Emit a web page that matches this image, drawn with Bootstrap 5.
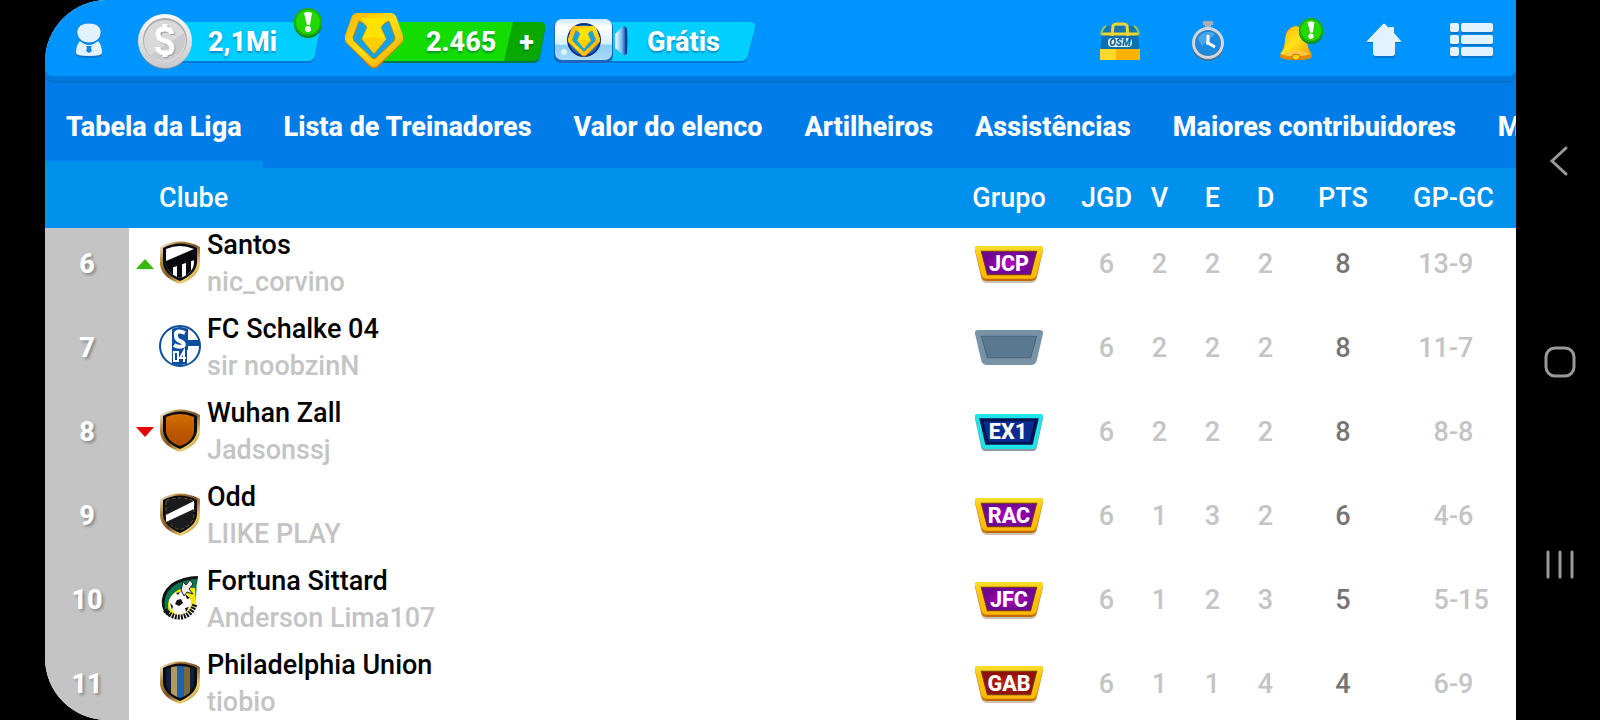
<!DOCTYPE html>
<html lang="pt-BR">
<head>
<meta charset="utf-8">
<meta name="viewport" content="width=device-width, initial-scale=1">
<title>Tabela da Liga</title>
<link href="https://cdn.jsdelivr.net/npm/bootstrap@5.3.0/dist/css/bootstrap.min.css" rel="stylesheet">
<style>
  body { font-family: Roboto, "Liberation Sans", sans-serif; font-size: 27px; font-weight: 500; background: #000; }
  .screen { padding-left: 45px; }
  .app { border-radius: 62px 0 0 62px; background: #fff; min-width: 0; }
  .topbar { height: 76px; background: #0094ff; border-radius: 0 0 8px 8px; box-shadow: 0 5px 0 #0079de, 0 7px 0 #006fce; z-index: 2; }
  .plain-btn { background: none; border: 0; padding: 0; color: #fff; }
  .icon-btn { width: 88px; height: 76px; }
  .pill { height: 76px; font-weight: 800; line-height: 40px; text-shadow: 0 2px 2px rgba(0, 50, 110, .4); padding-top: 8px; }
  .pill svg { left: 0; top: 0; overflow: visible; }
  .pill span { position: relative; }
  .pill-cash { width: 182px; padding-left: 70px; margin-left: 5px; }
  .pill-coins { width: 200px; padding-left: 81px; margin-left: 25px; }
  .pill-plus { padding-left: 23px; }
  .pill-video { width: 202px; padding-left: 94px; margin-left: 8px; }
  .tabs { background: #007ce8; height: 92px; padding-top: 4px; }
  .tabs a { color: #fff; font-weight: 800; padding: 0 21px; height: 88px; line-height: 94px; border-bottom: 7px solid transparent; text-decoration: none; }
  .tabs a.active { border-bottom-color: #0091ec; }
  .league-scroll { min-height: 0; }
  .league { table-layout: fixed; width: 100%; border-collapse: separate; border-spacing: 0; }
  .league th, .league td { padding: 0; text-align: center; vertical-align: middle; }
  .league thead th { position: sticky; top: 0; z-index: 1; height: 60px; background: #0091ec; color: #fff; font-weight: 500; }
  .league thead .club-head { text-align: left; padding-left: 30px; }
  .league tbody tr { height: 84px; line-height: 37px; color: #c4c4c4; }
  .league tbody th { background: #c4c4c4; color: #fff; font-weight: 800; text-shadow: 2px 2px 3px rgba(0, 0, 0, .3); }
  .league tbody .pts { color: #757575; }
  .league th:last-child:not(:first-child), .league td:last-child { padding-right: 3px; }
  .club-name { color: #000; }
  .move { width: 18px; margin: 0 5px 0 7px; }
  .crest { width: 42px; height: 44px; margin: 0 6px 4px 0; }
  .group-tag { display: block; width: 72px; height: 39px; margin: 0 auto; }
  .tag-text { font-size: 21px; font-weight: 800; fill: #fff; text-anchor: middle; }
  .half { flex: 1 1 0; }
  .sysbar { width: 84px; padding: 120px 0 116px 3px; }
  .c-rank { width: 84px; } .c-grupo { width: 142px; } .c-num { width: 53px; } .c-pts { width: 102px; } .c-goals { width: 122px; }
</style>
</head>
<body>
<svg width="0" height="0" class="position-absolute" aria-hidden="true">
  <defs>
    <linearGradient id="gold" x1="0" y1="0" x2="1" y2="1"><stop offset="0" stop-color="#fff"/><stop offset=".25" stop-color="#b58a3a"/><stop offset=".5" stop-color="#7a5026"/><stop offset=".75" stop-color="#f0cf6a"/><stop offset="1" stop-color="#8a5f28"/></linearGradient>
    <linearGradient id="rim" x1="0" y1="0" x2="0" y2="1"><stop offset="0" stop-color="#f7e02a"/><stop offset=".3" stop-color="#ffc40f"/><stop offset="1" stop-color="#fbb800"/></linearGradient>
    <linearGradient id="orange" x1="0" y1="0" x2="0" y2="1"><stop offset="0" stop-color="#d97a08"/><stop offset=".5" stop-color="#c05a00"/><stop offset="1" stop-color="#a84a00"/></linearGradient>
    <radialGradient id="purple"><stop offset="0" stop-color="#b800bd"/><stop offset="1" stop-color="#6d0791"/></radialGradient>
    <radialGradient id="red"><stop offset="0" stop-color="#c22410"/><stop offset="1" stop-color="#8a120a"/></radialGradient>
    <linearGradient id="silver" x1="0" y1="0" x2="0" y2="1"><stop offset="0" stop-color="#fafafa"/><stop offset="1" stop-color="#c9c9cd"/></linearGradient>
    <linearGradient id="yellow" x1="0" y1="0" x2="1" y2="1"><stop offset="0" stop-color="#ffb400"/><stop offset=".5" stop-color="#ffe11a"/><stop offset="1" stop-color="#f59a00"/></linearGradient>
    <linearGradient id="cam" x1="0" y1="0" x2="0" y2="1"><stop offset="0" stop-color="#cfe8fb"/><stop offset=".2" stop-color="#fff"/><stop offset=".6" stop-color="#d9effc"/><stop offset=".65" stop-color="#8ccdf5"/><stop offset="1" stop-color="#a9dcf9"/></linearGradient>
    <linearGradient id="lens" x1="0" y1="0" x2="1" y2="0"><stop offset="0" stop-color="#fff"/><stop offset=".6" stop-color="#78bdf0"/><stop offset="1" stop-color="#0b4aa8"/></linearGradient>
    <clipPath id="field"><path d="M7 9Q21 3 35 9V22Q35 33 21 38Q7 33 7 22Z"/></clipPath>
    <symbol id="shield" viewBox="0 0 42 44">
      <path d="M1 7Q21-4 41 7L41 24Q40 37 21 44Q2 37 1 24Z" fill="url(#gold)"/>
      <path d="M4 8Q21-1 38 8V23Q37 34 21 41Q5 34 4 23Z" fill="#0b0c12"/>
    </symbol>
    <symbol id="tag" viewBox="0 0 70 38">
      <path d="M5 3H65Q69 3 68 7L62 33Q61 37 57 37H13Q9 37 8 33L2 7Q1 3 5 3Z" fill="#6b4a20" opacity=".35"/>
      <path d="M5 1H65Q69 1 68 5L62 31Q61 35 57 35H13Q9 35 8 31L2 5Q1 1 5 1Z" fill="#bf6a05"/>
      <path d="M5 1H65Q69 1 68 5L62 29Q61 33 57 33H13Q9 33 8 29L2 5Q1 1 5 1Z" fill="url(#rim)"/>
      <path d="M8 6H62L56 29H14Z" stroke="#6f3a12" fill="currentColor"/>
    </symbol>
    <symbol id="alert" viewBox="0 0 30 32">
      <circle cx="15" cy="17" r="14" fill="#078a16"/><circle cx="15" cy="15" r="14" fill="#1fae10"/><circle cx="15" cy="15" r="12" fill="#1fd900"/>
      <path d="M11 6Q15 4 19 6L17 18H14Z" fill="#fff"/><circle cx="15" cy="22" r="3" fill="#fff"/>
    </symbol>
    <symbol id="gem" viewBox="0 0 58 56">
      <path d="M12 1H46Q49 1 51 4L58 24Q59 28 56 31L33 54Q29 57 25 54L2 31Q-1 28 0 24L7 4Q9 1 12 1Z" fill="#d97900"/>
      <path d="M12 0H46Q49 0 51 3L58 23Q59 27 56 30L33 52Q29 56 25 52L2 30Q-1 27 0 23L7 3Q9 0 12 0Z" fill="url(#yellow)"/>
      <path d="M14 8Q18 9 21 13L22 15 17 26 29 41 41 26 36 15 37 13Q40 9 44 8L50 24Q50 28 47 30L31 45Q29 47 27 45L11 30Q8 28 8 24Z" fill="#12a3e6" stroke="#c98a00" stroke-width="1"/>
      <path d="M17 5H41Q40 10 36 12V15L41 26 29 40 17 26 22 15V12Q18 10 17 5Z" fill="#ffe300"/><path d="M29 24L41 26 29 40 17 26Z" fill="#ffcd00"/>
    </symbol>
  </defs>
</svg>

<div class="screen d-flex vh-100 overflow-hidden">
  <main class="app d-flex flex-column flex-grow-1 overflow-hidden">
    <header class="topbar d-flex position-relative flex-shrink-0">
      <button class="plain-btn icon-btn" aria-label="Perfil">
        <svg class="d-block" width="88" height="76" viewBox="0 0 88 76"><path d="M35 43Q44 49 53 43Q57 47 57 55Q57 58 44 58T31 55Q31 47 35 43Z" fill="#0a75cc"/><path d="M44 24C54 24 57 30 56 35C55 41 49 44 44 44S33 41 32 35C31 30 34 24 44 24Z" fill="#0a75cc"/><g fill="#e2f3ff"><path d="M35 41Q44 49 53 41Q57 45 57 53Q57 56 44 56T31 53Q31 45 35 41Z"/><path d="M44 23C54 23 57 29 56 34C55 40 49 43 44 43S33 40 32 34C31 29 34 23 44 23Z" stroke="#0a84e6" stroke-width="1"/></g><path d="M41 46H47L46 48 47 51 44 53 41 51 42 48Z" fill="#1484dc"/></svg>
      </button>
      <button class="plain-btn pill pill-cash position-relative text-start">
        <svg class="position-absolute" width="182" height="76" viewBox="0 0 182 76" aria-hidden="true">
          <path d="M27 24H178Q183 24 182 30L177 57Q176 63 170 63H27Z" fill="#0078d6"/><path d="M27 22H178Q183 22 182 28L177 55Q176 61 170 61H27Z" fill="#00cfff"/><path d="M27 22H178Q183 22 182 28L180 40H27Z" fill="#0cf" opacity=".5"/>
          <circle cx="27" cy="43" r="26" fill="#87909a"/><circle cx="27" cy="41" r="27" fill="url(#silver)"/><circle cx="27" cy="40" r="22" fill="#aaa"/><circle cx="27" cy="41" r="21" fill="#dadadb"/>
          <path d="M12 55A21 21 0 0 0 46 33Z" fill="#cbcbce"/>
          <g fill="none" stroke="#999ca1" stroke-width="5" transform="translate(1 1)"><path d="M34 34Q33 29 27 29Q20 29 20 34T27 41T34 48T27 53Q20 53 20 47M27 24V29M27 53V57"/></g>
          <path d="M34 34Q33 29 27 29Q20 29 20 34T27 41T34 48T27 53Q20 53 20 47M27 24V29M27 53V57" fill="none" stroke="#fff" stroke-width="5"/>
          <use href="#alert" x="155" y="7" width="30" height="32"/>
        </svg>
        <span>2,1Mi</span>
      </button>
      <button class="plain-btn pill pill-coins position-relative text-start">
        <svg class="position-absolute" width="200" height="76" viewBox="0 0 200 76" aria-hidden="true">
          <path d="M27 24H195Q201 24 200 30L195 57Q194 63 187 63H27Z" fill="#007a4a"/><path d="M27 22H170L160 61H27Z" fill="#12dc00"/><path d="M168 22H195Q201 22 200 28L195 55Q194 61 187 61H159Z" fill="#08a800"/>
          <use href="#gem" x="0" y="13" width="58" height="56"/>
        </svg>
        <span>2.465</span><span class="pill-plus">+</span>
      </button>
      <button class="plain-btn pill pill-video position-relative text-start">
        <svg class="position-absolute" width="202" height="76" viewBox="0 0 202 76" aria-hidden="true">
          <path d="M50 24H197Q203 24 202 30L195 57Q194 63 187 63H50Z" fill="#0078d6"/><path d="M50 22H197Q203 22 202 28L195 55Q194 61 187 61H50Z" fill="#00cfff"/>
          <rect x="1" y="20" width="59" height="43" rx="7" fill="#1767bd"/><rect x="2" y="19" width="57" height="41" rx="7" fill="url(#cam)"/>
          <path d="M62 34L69 27Q73 24 73 29V52Q73 57 69 54L62 48Z" fill="url(#lens)"/><path d="M73 28Q74 41 73 54" fill="none" stroke="#0a3f96" stroke-width="2"/>
          <circle cx="11" cy="52" r="3" fill="#dff3ff"/><circle cx="8" cy="43" r="2" fill="#dff3ff"/>
          <circle cx="31" cy="40" r="17" fill="#0c2f8a"/><circle cx="31" cy="40" r="15" fill="#1572c4"/><use href="#gem" x="15" y="26" width="32" height="31"/>
        </svg>
        <span>Grátis</span>
      </button>
      <nav class="d-flex ms-auto" aria-label="Atalhos">
        <button class="plain-btn icon-btn" aria-label="Loja">
          <svg class="d-block" width="88" height="76" viewBox="0 0 88 76"><path d="M30 26H58Q62 28 63 36H25Q26 28 30 26Z" fill="#1676ae"/><path d="M26 35H62Q63 42 64 59H24Q25 42 26 35Z" fill="#0b6fb0"/><path d="M24 49H64V60H24Z" fill="#ffb300"/><path d="M24 49H40V60H24Z" fill="#ffd92a"/><path d="M26 34H62M36 36L37 26Q38 24 40 24H48Q50 24 51 26L52 36" fill="none" stroke="#f0d52c" stroke-width="3"/><path d="M30 26Q26 28 25 35M58 26Q62 28 63 35" fill="none" stroke="#8fc46a" stroke-width="2"/><rect x="32" y="38" width="24" height="9" rx="4" fill="#e6f7ff"/><text x="44" y="46" font-size="10" font-weight="900" font-style="italic" fill="#0863a8" text-anchor="middle">OSM</text></svg>
        </button>
        <button class="plain-btn icon-btn" aria-label="Cronômetro">
          <svg class="d-block" width="88" height="76" viewBox="0 0 88 76"><path d="M39 21H49V25H47V29H41V25H39Z" fill="#a9adb5"/><circle cx="44" cy="45" r="16" fill="#4c6f9a"/><circle cx="44" cy="43" r="16" fill="#d3d7dd"/><circle cx="44" cy="43" r="13" fill="#3a7fb5"/><circle cx="44" cy="43" r="12" fill="#1a8be0"/><path d="M34 39A11 11 0 0 1 51 34L38 46Z" fill="#6bb9ef" opacity=".6"/><path d="M44 35V43L51 47" fill="none" stroke="#fff" stroke-width="3"/><circle cx="44" cy="43" r="2" fill="#fff"/></svg>
        </button>
        <button class="plain-btn icon-btn" aria-label="Notificações">
          <svg class="d-block" width="88" height="76" viewBox="0 0 88 76"><path d="M28 56Q32 50 33 42Q33 27 44 26Q55 27 55 42Q56 50 60 56Q60 60 44 60T28 56Z" fill="#e88a00"/><path d="M28 54Q33 49 33 40Q34 28 44 26Q54 28 55 40Q55 49 60 54Q44 59 28 54Z" fill="url(#yellow)"/><path d="M30 54Q44 48 58 54Q44 58 30 54Z" fill="#ffc84a"/><ellipse cx="44" cy="57" rx="4" ry="3" fill="#ffd21a" stroke="#c86f00"/><use href="#alert" x="46" y="17" width="26" height="28"/></svg>
        </button>
        <button class="plain-btn icon-btn" aria-label="Início">
          <svg class="d-block" width="88" height="76" viewBox="0 0 88 76"><path d="M27 42Q26 43 28 43H33V55Q33 58 36 58H52Q55 58 55 55V43H60Q62 43 61 42L54 34V28H49V29L45 25Q44 24 43 25Z" fill="#0875cc"/><path d="M27 41Q26 42 28 42H33V53Q33 56 36 56H52Q55 56 55 53V42H60Q62 42 61 41L54 33V27H49V28L45 24Q44 23 43 24Z" fill="#e2f3ff"/></svg>
        </button>
        <button class="plain-btn icon-btn" aria-label="Menu">
          <svg class="d-block" width="88" height="76" viewBox="0 0 88 76"><g fill="#0875cc"><rect x="22" y="25" width="9" height="9" rx="2"/><rect x="33" y="25" width="32" height="9" rx="2"/><rect x="22" y="37" width="9" height="9" rx="2"/><rect x="33" y="37" width="32" height="9" rx="2"/><rect x="22" y="49" width="9" height="9" rx="2"/><rect x="33" y="49" width="32" height="9" rx="2"/></g><g fill="#e2f3ff"><rect x="22" y="23" width="9" height="9" rx="2"/><rect x="33" y="23" width="32" height="9" rx="2"/><rect x="22" y="35" width="9" height="9" rx="2"/><rect x="33" y="35" width="32" height="9" rx="2"/><rect x="22" y="47" width="9" height="9" rx="2"/><rect x="33" y="47" width="32" height="9" rx="2"/></g></svg>
        </button>
      </nav>
    </header>

    <nav class="tabs d-flex flex-shrink-0 text-nowrap overflow-hidden" aria-label="Classificações">
      <a class="active" aria-current="page" href="#liga">Tabela da Liga</a>
      <a href="#treinadores">Lista de Treinadores</a>
      <a href="#elenco">Valor do elenco</a>
      <a href="#artilheiros">Artilheiros</a>
      <a href="#assistencias">Assistências</a>
      <a href="#contribuidores">Maiores contribuidores</a>
      <a href="#mais">M</a>
    </nav>

    <div class="league-scroll flex-grow-1 overflow-hidden" id="liga">
      <table class="league">
        <colgroup><col class="c-rank"><col><col class="c-grupo"><col class="c-num"><col class="c-num"><col class="c-num"><col class="c-num"><col class="c-pts"><col class="c-goals"></colgroup>
        <thead><tr><th></th><th class="club-head">Clube</th><th>Grupo</th><th>JGD</th><th>V</th><th>E</th><th>D</th><th>PTS</th><th>GP-GC</th></tr></thead>
        <tbody>
          <tr><th>6</th>
            <td><div class="d-flex align-items-center"><svg class="move" height="10" viewBox="0 0 18 10" role="img" aria-label="Subiu"><path d="M9 0L18 10H0Z" fill="#38b90a"/></svg>
              <svg class="crest" viewBox="0 0 42 44" aria-hidden="true"><use href="#shield" width="42" height="44"/><g clip-path="url(#field)"><path d="M0 0H42V44H0Z" fill="#fff"/><path d="M0 24L42 6V18L0 32Z" fill="#08070d"/><path d="M4 22H14V44H4ZM18 20H23V44H18ZM27 17H32V44H27ZM35 14H38V44H35Z" fill="#08070d"/></g></svg>
              <div class="text-start"><div class="club-name">Santos</div><div>nic_corvino</div></div></div></td>
            <td><svg class="group-tag" viewBox="0 0 70 38" color="#85009b"><use href="#tag" width="70" height="38"/><path d="M9 7H61L56 28H14Z" fill="url(#purple)"/><text class="tag-text" x="35" y="25">JCP</text></svg></td>
            <td>6</td><td>2</td><td>2</td><td>2</td><td class="pts">8</td><td><div class="d-flex"><span class="half text-end">13</span><span>-</span><span class="half text-start">9</span></div></td></tr>
          <tr><th>7</th>
            <td><div class="d-flex align-items-center"><span class="move"></span>
              <svg class="crest" viewBox="0 0 42 44" aria-hidden="true"><circle cx="21" cy="22" r="20" fill="#fff" stroke="#0b4f9e" stroke-width="2"/><path d="M13 5Q21 1 29 5V16H41V22H29V26H13Z" fill="#0b4f9e"/><path d="M26 9Q16 5 17 12Q17 16 23 18Q26 20 24 22Q20 24 15 21" fill="none" stroke="#fff" stroke-width="4"/><path d="M13 26H28V40Q20 42 13 40Z" fill="#0b4f9e"/><path d="M15 28H19V37H15ZM25 38V27L21 34H27" fill="none" stroke="#fff" stroke-width="2"/></svg>
              <div class="text-start"><div class="club-name">FC Schalke 04</div><div>sir noobzinN</div></div></div></td>
            <td><svg class="group-tag" viewBox="0 0 70 38" role="img" aria-label="Sem grupo"><path d="M5 1H65Q69 1 68 5L62 31Q61 35 57 35H13Q9 35 8 31L2 5Q1 1 5 1Z" fill="#7893a6"/><path d="M8 7H62L56 28H14Z" fill="#5a788f" stroke="#48657b"/></svg></td>
            <td>6</td><td>2</td><td>2</td><td>2</td><td class="pts">8</td><td><div class="d-flex"><span class="half text-end">11</span><span>-</span><span class="half text-start">7</span></div></td></tr>
          <tr><th>8</th>
            <td><div class="d-flex align-items-center"><svg class="move" height="10" viewBox="0 0 18 10" role="img" aria-label="Desceu"><path d="M0 0H18L9 10Z" fill="#e30000"/></svg>
              <svg class="crest" viewBox="0 0 42 44" aria-hidden="true"><use href="#shield" width="42" height="44"/><g clip-path="url(#field)"><path d="M0 0H42V44H0Z" fill="url(#orange)"/></g></svg>
              <div class="text-start"><div class="club-name">Wuhan Zall</div><div>Jadsonssj</div></div></div></td>
            <td><svg class="group-tag" viewBox="0 0 70 38"><path d="M4 3H66Q69 3 68 6L62 34Q61 37 58 37H12Q9 37 8 34L2 6Q1 3 4 3Z" fill="#456" opacity=".6"/><path d="M4 1H66Q69 1 68 4L62 32Q61 35 58 35H12Q9 35 8 32L2 4Q1 1 4 1Z" fill="#1fe4ea"/><path d="M6 5H64L58 31H12Z" fill="#03144f"/><path d="M10 8H60L55 28H15Z" fill="#0a2b8f"/><text class="tag-text" x="34" y="25">EX1</text></svg></td>
            <td>6</td><td>2</td><td>2</td><td>2</td><td class="pts">8</td><td><div class="d-flex"><span class="half text-end">8</span><span>-</span><span class="half text-start">8</span></div></td></tr>
          <tr><th>9</th>
            <td><div class="d-flex align-items-center"><span class="move"></span>
              <svg class="crest" viewBox="0 0 42 44" aria-hidden="true"><use href="#shield" width="42" height="44"/><path d="M7 9Q21 3 35 9V22Q35 33 21 38Q7 33 7 22Z" fill="#1b1b1d" stroke="#6b5a30" stroke-dasharray="4 2"/><path d="M7 23L35 9V17L7 30Z" fill="#fff"/></svg>
              <div class="text-start"><div class="club-name">Odd</div><div>LIIKE PLAY</div></div></div></td>
            <td><svg class="group-tag" viewBox="0 0 70 38" color="#85009b"><use href="#tag" width="70" height="38"/><path d="M9 7H61L56 28H14Z" fill="url(#purple)"/><text class="tag-text" x="35" y="25">RAC</text></svg></td>
            <td>6</td><td>1</td><td>3</td><td>2</td><td class="pts">6</td><td><div class="d-flex"><span class="half text-end">4</span><span>-</span><span class="half text-start">6</span></div></td></tr>
          <tr><th>10</th>
            <td><div class="d-flex align-items-center"><span class="move"></span>
              <svg class="crest" viewBox="0 0 42 44" aria-hidden="true"><path d="M39 0Q24 0 12 8Q1 17 3 30Q5 38 11 41Q6 26 15 14Q26 5 38 8Z" fill="#111"/><path d="M38 3Q24 3 13 11Q3 20 6 34L11 37Q33 40 37 22Z" fill="#08774f"/><path d="M36 12Q20 10 13 19Q6 28 11 37Q30 42 37 27Z" fill="#f5e800"/><circle cx="21" cy="27" r="11" fill="#fff"/><path d="M18 24L22 23 24 27 20 30 16 28ZM11 27L14 30 13 34ZM26 18L31 22 28 23ZM26 32L30 31 27 36ZM17 17L21 16 19 19Z" fill="#111"/><path d="M24 6L27 9 31 4 34 8 30 13 34 18 28 16 25 20 22 14Z" fill="#eee" stroke="#222"/><path d="M6 34Q13 42 22 41Q32 40 36 28" fill="none" stroke="#111" stroke-width="5" stroke-dasharray="2 1"/></svg>
              <div class="text-start"><div class="club-name">Fortuna Sittard</div><div>Anderson Lima107</div></div></div></td>
            <td><svg class="group-tag" viewBox="0 0 70 38" color="#85009b"><use href="#tag" width="70" height="38"/><path d="M9 7H61L56 28H14Z" fill="url(#purple)"/><text class="tag-text" x="35" y="25">JFC</text></svg></td>
            <td>6</td><td>1</td><td>2</td><td>3</td><td class="pts">5</td><td><div class="d-flex"><span class="half text-end">5</span><span>-</span><span class="half text-start">15</span></div></td></tr>
          <tr><th>11</th>
            <td><div class="d-flex align-items-center"><span class="move"></span>
              <svg class="crest" viewBox="0 0 42 44" aria-hidden="true"><use href="#shield" width="42" height="44"/><g clip-path="url(#field)"><path d="M0 0H42V44H0Z" fill="#0c2238"/><path d="M12 0H18V44H12Z" fill="#b3995a"/><path d="M18 0H25V44H18Z" fill="#1c62a8"/><path d="M25 0H31V44H25Z" fill="#7d683c"/></g></svg>
              <div class="text-start"><div class="club-name">Philadelphia Union</div><div>tiobio</div></div></div></td>
            <td><svg class="group-tag" viewBox="0 0 70 38" color="#9a170c"><use href="#tag" width="70" height="38"/><path d="M9 7H61L56 28H14Z" fill="url(#red)"/><text class="tag-text" x="35" y="25">GAB</text></svg></td>
            <td>6</td><td>1</td><td>1</td><td>4</td><td class="pts">4</td><td><div class="d-flex"><span class="half text-end">6</span><span>-</span><span class="half text-start">9</span></div></td></tr>
        </tbody>
      </table>
    </div>
  </main>

  <aside class="sysbar d-flex flex-column align-items-center justify-content-between flex-shrink-0" aria-label="Navegação do sistema">
    <button class="plain-btn" aria-label="Voltar"><svg class="d-block" width="40" height="82" viewBox="0 0 40 82"><path d="M26 28L12 41 26 54" fill="none" stroke="#999" stroke-width="3" stroke-linecap="round"/></svg></button>
    <button class="plain-btn" aria-label="Início"><svg class="d-block" width="40" height="82" viewBox="0 0 40 82"><rect x="6" y="27" width="28" height="28" rx="9" fill="none" stroke="#999" stroke-width="3"/></svg></button>
    <button class="plain-btn" aria-label="Recentes"><svg class="d-block" width="40" height="82" viewBox="0 0 40 82"><path d="M8 30V55M20 30V55M32 30V55" stroke="#999" stroke-width="3" stroke-linecap="round"/></svg></button>
  </aside>
</div>
<script src="https://cdn.jsdelivr.net/npm/bootstrap@5.3.0/dist/js/bootstrap.bundle.min.js"></script>
<script>
  // Open the list slightly scrolled, with the header row kept in view.
  document.getElementById('liga').scrollTop = 6;
</script>
</body>
</html>
